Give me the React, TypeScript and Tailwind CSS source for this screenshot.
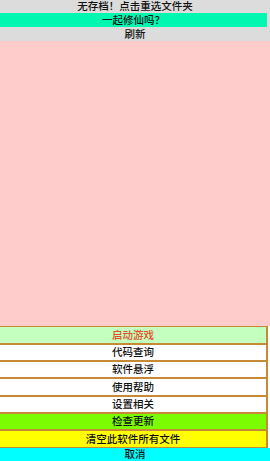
const FONT = "font-['Liberation_Sans','Noto_Sans_CJK_SC',sans-serif]";

const MENU = [
  { label: "启动游戏", cls: "h-[18px] bg-[#c4ffbf] text-[#e0502a]" },
  { label: "代码查询", cls: "h-[17px] bg-white text-[#111]" },
  { label: "软件悬浮", cls: "h-[17px] bg-white text-[#111]" },
  { label: "使用帮助", cls: "h-[18px] bg-white text-[#111]" },
  { label: "设置相关", cls: "h-[17px] bg-white text-[#111]" },
  { label: "检查更新", cls: "h-[17px] bg-[#7cfc00] text-[#111]" },
  { label: "清空此软件所有文件", cls: "h-[18px] bg-[#ffff00] text-[#111]" },
];

export default function App() {
  return (
    <div className={`flex h-[461px] w-[270px] flex-col bg-[#dcdcdc] text-[10.5px] font-medium leading-none ${FONT}`}>
      <div className="flex h-[13px] items-center justify-center text-[#111]">无存档！点击重选文件夹</div>
      <div className="mr-[3px] flex h-[14px] items-center justify-center bg-[#00f7b0] text-[#111]">一起修仙吗？</div>
      <div className="flex h-[14px] items-center justify-center text-[#111]">刷新</div>
      <div className="flex-1 bg-[#ffcccc]" />
      <div className="flex flex-col bg-white">
        {MENU.map((item) => (
          <div
            key={item.label}
            className={`flex w-[268px] items-center justify-center border-y border-r-2 border-y-[#c58a33] border-r-[#c58a33] ${item.cls}`}
          >
            {item.label}
          </div>
        ))}
        <div className="flex h-[13px] items-center justify-center bg-[#00ffff] text-[#111]">取消</div>
      </div>
    </div>
  );
}
